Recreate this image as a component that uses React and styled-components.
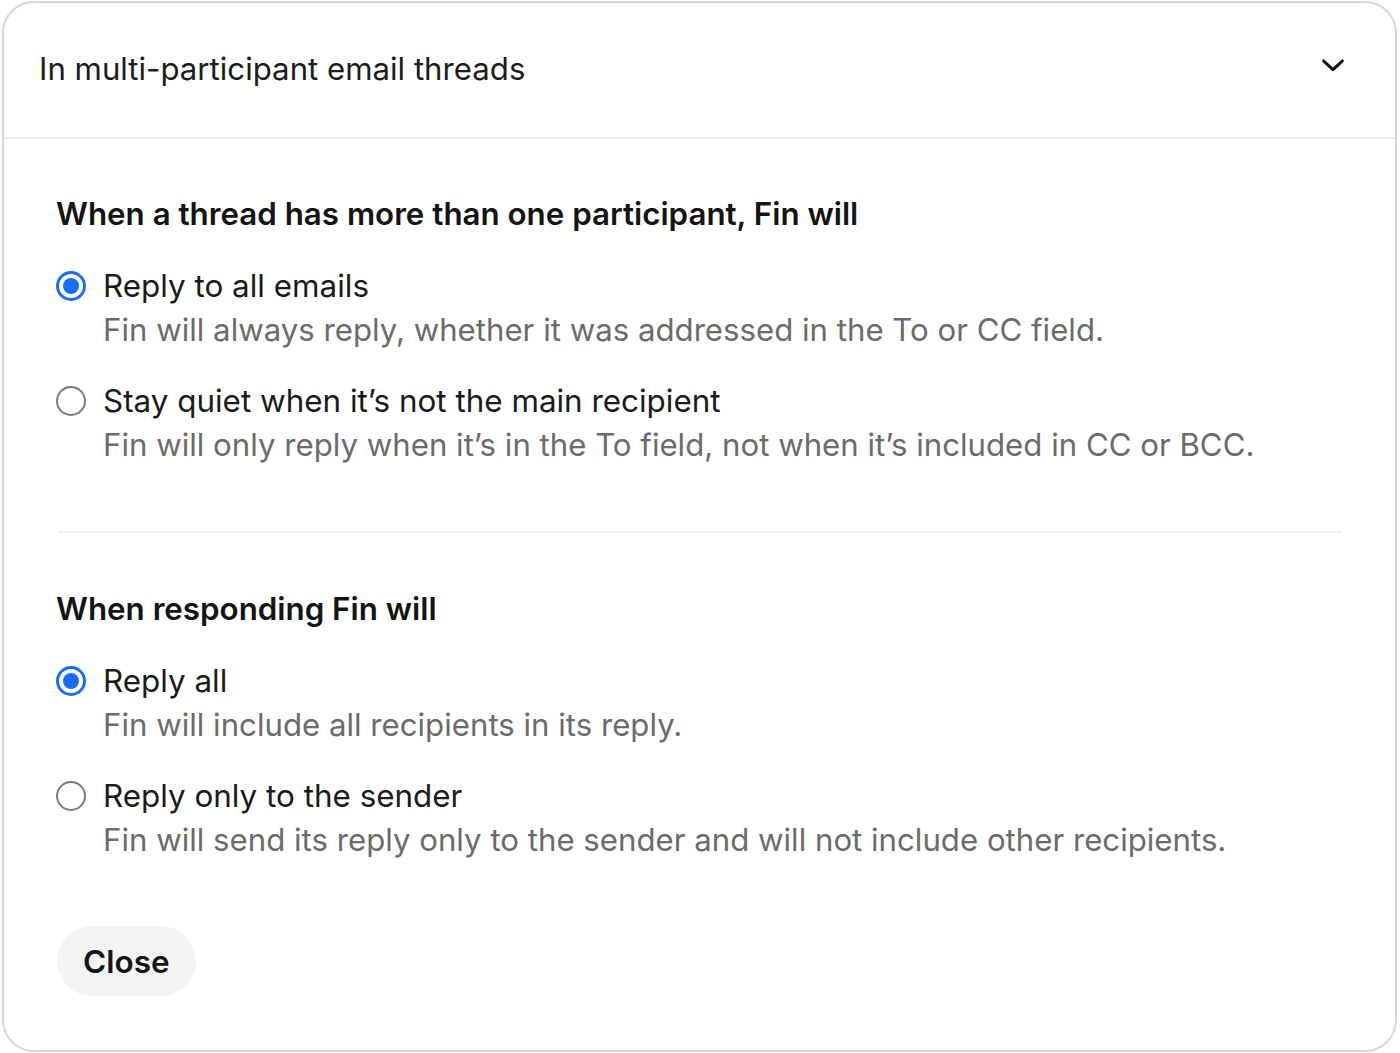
import React, { useState } from "react";
import styled, { createGlobalStyle } from "styled-components";

const Global = createGlobalStyle`
  html, body { margin: 0; padding: 0; background: #ffffff; }
  body { font-family: Inter, "Noto Sans", Arial, sans-serif; color: #1a1a1a; }
  * { box-sizing: border-box; }
`;

const Card = styled.div`
  margin: 1px 3px 0 2px;
  height: 1051px;
  border: 2px solid #d9d9d3;
  border-radius: 32px;
  background: #fff;
  display: flex;
  flex-direction: column;
  overflow: hidden;
`;

const Header = styled.div`
  height: 136px;
  flex: none;
  display: flex;
  align-items: center;
  justify-content: space-between;
  padding: 0 46px 2px 35px;
  border-bottom: 2px solid #ececec;
  cursor: pointer;
`;

const HeaderTitle = styled.span`
  font-size: 31.2px;
  font-weight: 400;
  color: #1c1c1c;
`;

const Chevron = styled.svg`
  width: 32px;
  height: 32px;
  margin-top: -9px;
`;

const Body = styled.div`
  padding: 55px 53px 0 52px;
  display: flex;
  flex-direction: column;
`;

const Section = styled.section`
  display: flex;
  flex-direction: column;
`;

const Heading = styled.h3`
  margin: 0 0 30px;
  font-size: 31.3px;
  line-height: 40px;
  font-weight: 600;
  color: #141414;
`;

const OptionList = styled.div`
  display: flex;
  flex-direction: column;
  gap: 27px;
`;

const Option = styled.label`
  display: grid;
  grid-template-columns: 30px 1fr;
  column-gap: 17px;
  cursor: pointer;
`;

const Radio = styled.span`
  width: 30px;
  height: 30px;
  margin-top: 7px;
  border-radius: 50%;
  border: ${(p) => (p.$checked ? "3px solid #1a6bff" : "2px solid #7a7a7a")};
  display: flex;
  align-items: center;
  justify-content: center;
  &::after {
    content: "";
    display: ${(p) => (p.$checked ? "block" : "none")};
    width: 16px;
    height: 16px;
    border-radius: 50%;
    background: #1a6bff;
  }
`;

const OptionText = styled.div`
  display: flex;
  flex-direction: column;
`;

const Label = styled.span`
  font-size: 31.4px;
  line-height: 44px;
  color: #1a1a1a;
`;

const Description = styled.span`
  font-size: 31.2px;
  line-height: 44px;
  color: #6b6b6b;
`;

const Divider = styled.hr`
  margin: 64px 0 56px 2px;
  border: none;
  border-top: 2px solid #ececec;
`;

const CloseButton = styled.button`
  margin-top: 64px;
  align-self: flex-start;
  height: 70px;
  padding: 0 26px;
  margin-left: 1px;
  border: none;
  border-radius: 35px;
  background: #f4f4f4;
  font-family: inherit;
  font-size: 31.5px;
  font-weight: 600;
  color: #141414;
  cursor: pointer;
`;

const RadioGroup = ({ heading, options, value, onChange }) => (
  <Section>
    <Heading>{heading}</Heading>
    <OptionList>
      {options.map((o) => (
        <Option key={o.id} onClick={() => onChange(o.id)}>
          <Radio $checked={value === o.id} />
          <OptionText>
            <Label>{o.label}</Label>
            <Description>{o.description}</Description>
          </OptionText>
        </Option>
      ))}
    </OptionList>
  </Section>
);

export default function App() {
  const [participants, setParticipants] = useState("all");
  const [respond, setRespond] = useState("replyAll");

  return (
    <>
      <Global />
      <Card>
        <Header>
          <HeaderTitle>In multi-participant email threads</HeaderTitle>
          <Chevron viewBox="0 0 24 24" fill="none" stroke="#111" strokeWidth="2.3" strokeLinecap="round" strokeLinejoin="round">
            <path d="M5 9l7 6.5L19 9" />
          </Chevron>
        </Header>
        <Body>
          <RadioGroup
            heading="When a thread has more than one participant, Fin will"
            value={participants}
            onChange={setParticipants}
            options={[
              {
                id: "all",
                label: "Reply to all emails",
                description: "Fin will always reply, whether it was addressed in the To or CC field.",
              },
              {
                id: "quiet",
                label: "Stay quiet when it’s not the main recipient",
                description: "Fin will only reply when it’s in the To field, not when it’s included in CC or BCC.",
              },
            ]}
          />
          <Divider />
          <RadioGroup
            heading="When responding Fin will"
            value={respond}
            onChange={setRespond}
            options={[
              {
                id: "replyAll",
                label: "Reply all",
                description: "Fin will include all recipients in its reply.",
              },
              {
                id: "sender",
                label: "Reply only to the sender",
                description: "Fin will send its reply only to the sender and will not include other recipients.",
              },
            ]}
          />
          <CloseButton>Close</CloseButton>
        </Body>
      </Card>
    </>
  );
}
